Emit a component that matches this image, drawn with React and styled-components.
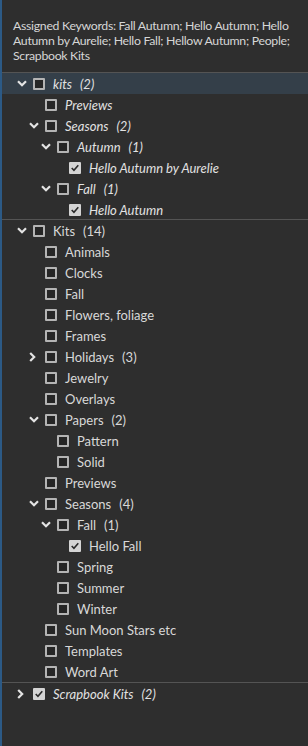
import React from "react";
import styled, { createGlobalStyle } from "styled-components";

const Global = createGlobalStyle`
  html, body { margin: 0; padding: 0; background: #2e2e2e; }
  body { font-family: Lato, "Noto Sans", sans-serif; }
`;

const Panel = styled.div`
  width: 308px;
  height: 746px;
  box-sizing: border-box;
  background: #2e2e2e;
  border-left: 2px solid #2c5a86;
  display: flex;
  flex-direction: column;
  overflow: hidden;
`;

const Keywords = styled.div`
  padding: 18px 8px 9px 11px;
  font-size: 12.3px;
  letter-spacing: -0.3px;
  line-height: 15px;
  color: #d6d6d6;
`;

const Section = styled.div`
  border-top: 1px solid #545454;
  margin-top: ${(p) => (p.$overlap ? "-1px" : "0")};
  display: flex;
  flex-direction: column;
`;

const Row = styled.div`
  height: 21px;
  display: flex;
  align-items: center;
  padding-left: ${(p) => 13 + p.$level * 12}px;
  background: ${(p) => (p.$head ? "#343f49" : "transparent")};
  font-size: 13px;
  font-style: ${(p) => (p.$italic ? "italic" : "normal")};
  color: ${(p) => (p.$italic ? "#e2e2e2" : "#d8d8d8")};
  white-space: nowrap;
`;

const Chevron = styled.span`
  width: 18px;
  height: 21px;
  display: flex;
  align-items: center;
  justify-content: flex-start;
  padding-left: 2px;
  box-sizing: border-box;
`;

const Box = styled.span`
  width: 12px;
  height: 12px;
  box-sizing: border-box;
  border: 2px solid ${(p) => (p.$checked ? "#d4d4d4" : "#b4b4b4")};
  background: ${(p) => (p.$checked ? "#d4d4d4" : "#262626")};
  border-radius: 1px;
  display: flex;
  align-items: center;
  justify-content: center;
  flex: none;
`;

const Label = styled.span`
  margin-left: 8px;
`;

const Count = styled.span`
  margin-left: 8px;
`;

const Down = () => (
  <svg width="10" height="7" viewBox="0 0 10 7">
    <path d="M1 1.2 L5 5.2 L9 1.2" stroke="#e4e4e4" strokeWidth="2.2" fill="none" />
  </svg>
);
const Right = () => (
  <svg width="7" height="10" viewBox="0 0 7 10">
    <path d="M1.2 1 L5.2 5 L1.2 9" stroke="#e4e4e4" strokeWidth="2.2" fill="none" />
  </svg>
);
const Check = () => (
  <svg width="9" height="8" viewBox="0 0 9 8">
    <path d="M0.8 4 L3.3 6.5 L8.2 0.8" stroke="#2a2a2a" strokeWidth="1.8" fill="none" />
  </svg>
);

const Item = ({ level, label, count, open, checked, italic, head }) => (
  <Row $level={level} $italic={italic} $head={head}>
    <Chevron>{open === true ? <Down /> : open === false ? <Right /> : null}</Chevron>
    <Box $checked={checked}>{checked && <Check />}</Box>
    <Label>{label}</Label>
    {count !== undefined && <Count>({count})</Count>}
  </Row>
);

const group1 = [
  { level: 0, label: "kits", count: 2, open: true, head: true },
  { level: 1, label: "Previews" },
  { level: 1, label: "Seasons", count: 2, open: true },
  { level: 2, label: "Autumn", count: 1, open: true },
  { level: 3, label: "Hello Autumn by Aurelie", checked: true },
  { level: 2, label: "Fall", count: 1, open: true },
  { level: 3, label: "Hello Autumn", checked: true },
];

const group2 = [
  { level: 0, label: "Kits", count: 14, open: true },
  { level: 1, label: "Animals" },
  { level: 1, label: "Clocks" },
  { level: 1, label: "Fall" },
  { level: 1, label: "Flowers, foliage" },
  { level: 1, label: "Frames" },
  { level: 1, label: "Holidays", count: 3, open: false },
  { level: 1, label: "Jewelry" },
  { level: 1, label: "Overlays" },
  { level: 1, label: "Papers", count: 2, open: true },
  { level: 2, label: "Pattern" },
  { level: 2, label: "Solid" },
  { level: 1, label: "Previews" },
  { level: 1, label: "Seasons", count: 4, open: true },
  { level: 2, label: "Fall", count: 1, open: true },
  { level: 3, label: "Hello Fall", checked: true },
  { level: 2, label: "Spring" },
  { level: 2, label: "Summer" },
  { level: 2, label: "Winter" },
  { level: 1, label: "Sun Moon Stars etc" },
  { level: 1, label: "Templates" },
  { level: 1, label: "Word Art" },
];

const group3 = [
  { level: 0, label: "Scrapbook Kits", count: 2, open: false, checked: true, italic: true },
];

export default function App() {
  return (
    <>
      <Global />
      <Panel>
        <Keywords>
          Assigned Keywords: Fall Autumn; Hello Autumn; Hello Autumn by Aurelie; Hello Fall; Hellow Autumn; People; Scrapbook Kits
        </Keywords>
        <Section>
          {group1.map((it, i) => (
            <Item key={i} {...it} italic />
          ))}
        </Section>
        <Section $overlap>
          {group2.map((it, i) => (
            <Item key={i} {...it} />
          ))}
        </Section>
        <Section>
          {group3.map((it, i) => (
            <Item key={i} {...it} />
          ))}
        </Section>
      </Panel>
    </>
  );
}
